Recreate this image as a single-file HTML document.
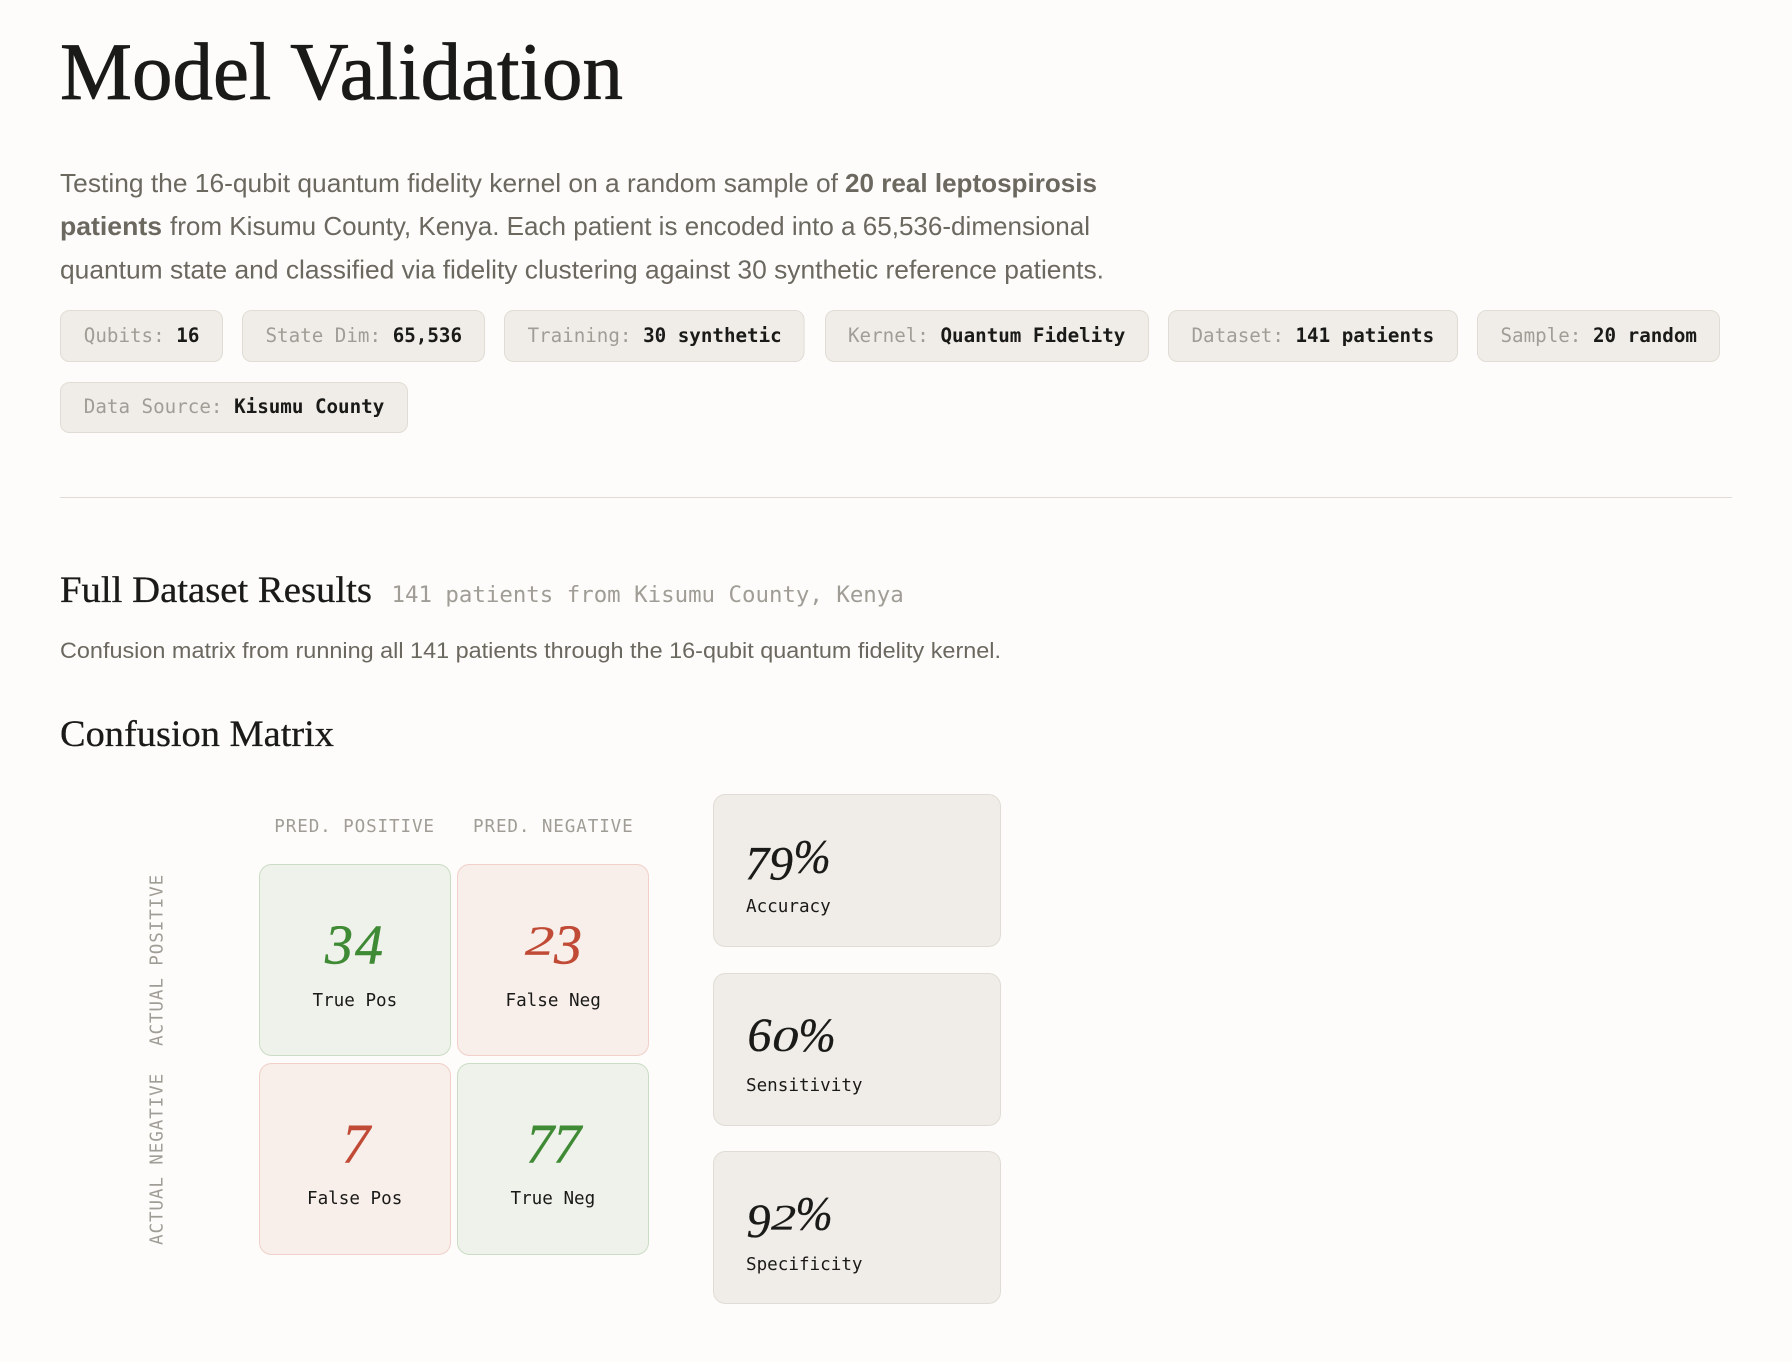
<!DOCTYPE html>
<html lang="en">
<head>
<meta charset="utf-8">
<title>Model Validation</title>
<style>
html,body{margin:0;padding:0;background:#fdfcfa;width:1792px;height:1362px;overflow:hidden}
svg{display:block}
.serif{font-family:"Liberation Serif",serif;fill:#1a1a18;stroke:#1a1a18;stroke-width:.3px}
.h1{stroke-width:.8px}
.sans{font-family:"Liberation Sans",sans-serif;fill:#6b6860}
.mono{font-family:"DejaVu Sans Mono","Liberation Mono",monospace}
.pill{fill:#f0ede8;stroke:#e0dcd5;stroke-width:1}
.pk{font-size:19.2px;fill:#a09d96}
.pv{font-size:19.2px;font-weight:700;fill:#1a1a18}
.ax{font-size:17.6px;letter-spacing:.88px;fill:#a09d96}
.lb{font-size:17.6px;fill:#1a1a18}
.g{fill:#eff2ea;stroke:#cbdcc6}
.r{fill:#f8eeea;stroke:#f0d0c9}
.n{font-family:"Liberation Serif",serif;font-style:italic;font-size:56px;stroke-width:.5px}
.ng{fill:#3f8a35;stroke:#3f8a35}.nr{fill:#c04a35;stroke:#c04a35}
.s{font-family:"Liberation Serif",serif;font-style:italic;font-size:48px;fill:#1a1a18;stroke:#1a1a18;stroke-width:.35px}
</style>
</head>
<body>
<svg xmlns="http://www.w3.org/2000/svg" width="1792" height="1362" viewBox="0 0 1792 1362">
<rect width="1792" height="1362" fill="#fdfcfa"/>

<text class="serif h1" x="60" y="99" font-size="82" textLength="563" lengthAdjust="spacingAndGlyphs">Model Validation</text>

<text class="sans" x="60" y="192" font-size="26" textLength="778" lengthAdjust="spacingAndGlyphs">Testing the 16-qubit quantum fidelity kernel on a random sample of</text>
<text class="sans" x="845" y="192" font-size="26" font-weight="700" textLength="252" lengthAdjust="spacingAndGlyphs">20 real leptospirosis</text>
<text class="sans" x="60" y="235" font-size="26" font-weight="700" textLength="102" lengthAdjust="spacingAndGlyphs">patients</text>
<text class="sans" x="170" y="235" font-size="26" textLength="920" lengthAdjust="spacingAndGlyphs">from Kisumu County, Kenya. Each patient is encoded into a 65,536-dimensional</text>
<text class="sans" x="60" y="278.5" font-size="26" textLength="1044" lengthAdjust="spacingAndGlyphs">quantum state and classified via fidelity clustering against 30 synthetic reference patients.</text>

<g class="mono">
<rect class="pill" x="60.5" y="310.5" width="162" height="51" rx="9"/>
<text class="pk" x="83.8" y="342">Qubits:</text><text class="pv" x="176.3" y="342">16</text>
<rect class="pill" x="242.5" y="310.5" width="242" height="51" rx="9"/>
<text class="pk" x="265.5" y="342">State Dim:</text><text class="pv" x="392.7" y="342">65,536</text>
<rect class="pill" x="504.5" y="310.5" width="299.5" height="51" rx="9"/>
<text class="pk" x="527.5" y="342">Training:</text><text class="pv" x="643.1" y="342">30 synthetic</text>
<rect class="pill" x="825.5" y="310.5" width="323" height="51" rx="9"/>
<text class="pk" x="848" y="342">Kernel:</text><text class="pv" x="940.5" y="342">Quantum Fidelity</text>
<rect class="pill" x="1168.5" y="310.5" width="289" height="51" rx="9"/>
<text class="pk" x="1191.5" y="342">Dataset:</text><text class="pv" x="1295.5" y="342">141 patients</text>
<rect class="pill" x="1477.5" y="310.5" width="242" height="51" rx="9"/>
<text class="pk" x="1500.5" y="342">Sample:</text><text class="pv" x="1593" y="342">20 random</text>
<rect class="pill" x="60.5" y="382.5" width="347" height="50" rx="9"/>
<text class="pk" x="83.8" y="413">Data Source:</text><text class="pv" x="234.1" y="413">Kisumu County</text>
</g>

<rect x="60" y="497" width="1672" height="1" fill="#e0dcd5"/>

<text class="serif" x="60" y="602" font-size="37" textLength="312" lengthAdjust="spacingAndGlyphs">Full Dataset Results</text>
<text class="mono" x="391.5" y="602" font-size="22.4" fill="#a09d96">141 patients from Kisumu County, Kenya</text>
<text class="sans" x="60" y="658" font-size="22.6" textLength="941" lengthAdjust="spacingAndGlyphs">Confusion matrix from running all 141 patients through the 16-qubit quantum fidelity kernel.</text>
<text class="serif" x="60" y="746" font-size="37" textLength="274" lengthAdjust="spacingAndGlyphs">Confusion Matrix</text>

<g class="mono">
<text class="ax" x="274.3" y="832">PRED. POSITIVE</text>
<text class="ax" x="473" y="832">PRED. NEGATIVE</text>
<text class="ax" transform="translate(162.7,1046) rotate(-90)">ACTUAL POSITIVE</text>
<text class="ax" transform="translate(162.7,1245) rotate(-90)">ACTUAL NEGATIVE</text>
</g>

<rect class="g" x="259.5" y="864.5" width="191" height="191" rx="12"/>
<rect class="r" x="457.5" y="864.5" width="191" height="191" rx="12"/>
<rect class="r" x="259.5" y="1063.5" width="191" height="191" rx="12"/>
<rect class="g" x="457.5" y="1063.5" width="191" height="191" rx="12"/>

<text class="n ng" x="325" y="963.5">3</text>
<text class="n ng" x="355" y="963.5">4</text>
<text class="n nr" transform="translate(525,954.5) scale(1.05,.74)">2</text>
<text class="n nr" x="554" y="963.5">3</text>
<text class="n nr" x="342" y="1162.5">7</text>
<text class="n ng" x="526" y="1162.5">7</text>
<text class="n ng" x="553" y="1162.5">7</text>

<g class="mono">
<text class="lb" x="312.5" y="1006">True Pos</text>
<text class="lb" x="505.5" y="1006">False Neg</text>
<text class="lb" x="307" y="1204">False Pos</text>
<text class="lb" x="510.5" y="1204">True Neg</text>
</g>

<rect class="pill" x="713.5" y="794.5" width="287" height="152" rx="12"/>
<rect class="pill" x="713.5" y="973.5" width="287" height="152" rx="12"/>
<rect class="pill" x="713.5" y="1151.5" width="287" height="152" rx="12"/>

<text class="s" x="745" y="879.5">7</text>
<text class="s" x="769" y="879.5">9</text>
<text class="s" transform="translate(793.5,872.5) scale(.93,1)">%</text>

<text class="s" x="747.5" y="1051">6</text>
<text class="s" transform="translate(772,1051) scale(1.1,.72)">0</text>
<text class="s" transform="translate(798.5,1051) scale(.93,1)">%</text>

<text class="s" x="746.5" y="1237">9</text>
<text class="s" transform="translate(771,1229.5) scale(1.05,.74)">2</text>
<text class="s" transform="translate(795.5,1229.5) scale(.93,1)">%</text>

<g class="mono">
<text class="lb" x="746" y="912">Accuracy</text>
<text class="lb" x="746" y="1091">Sensitivity</text>
<text class="lb" x="746" y="1270">Specificity</text>
</g>
</svg>
</body>
</html>
